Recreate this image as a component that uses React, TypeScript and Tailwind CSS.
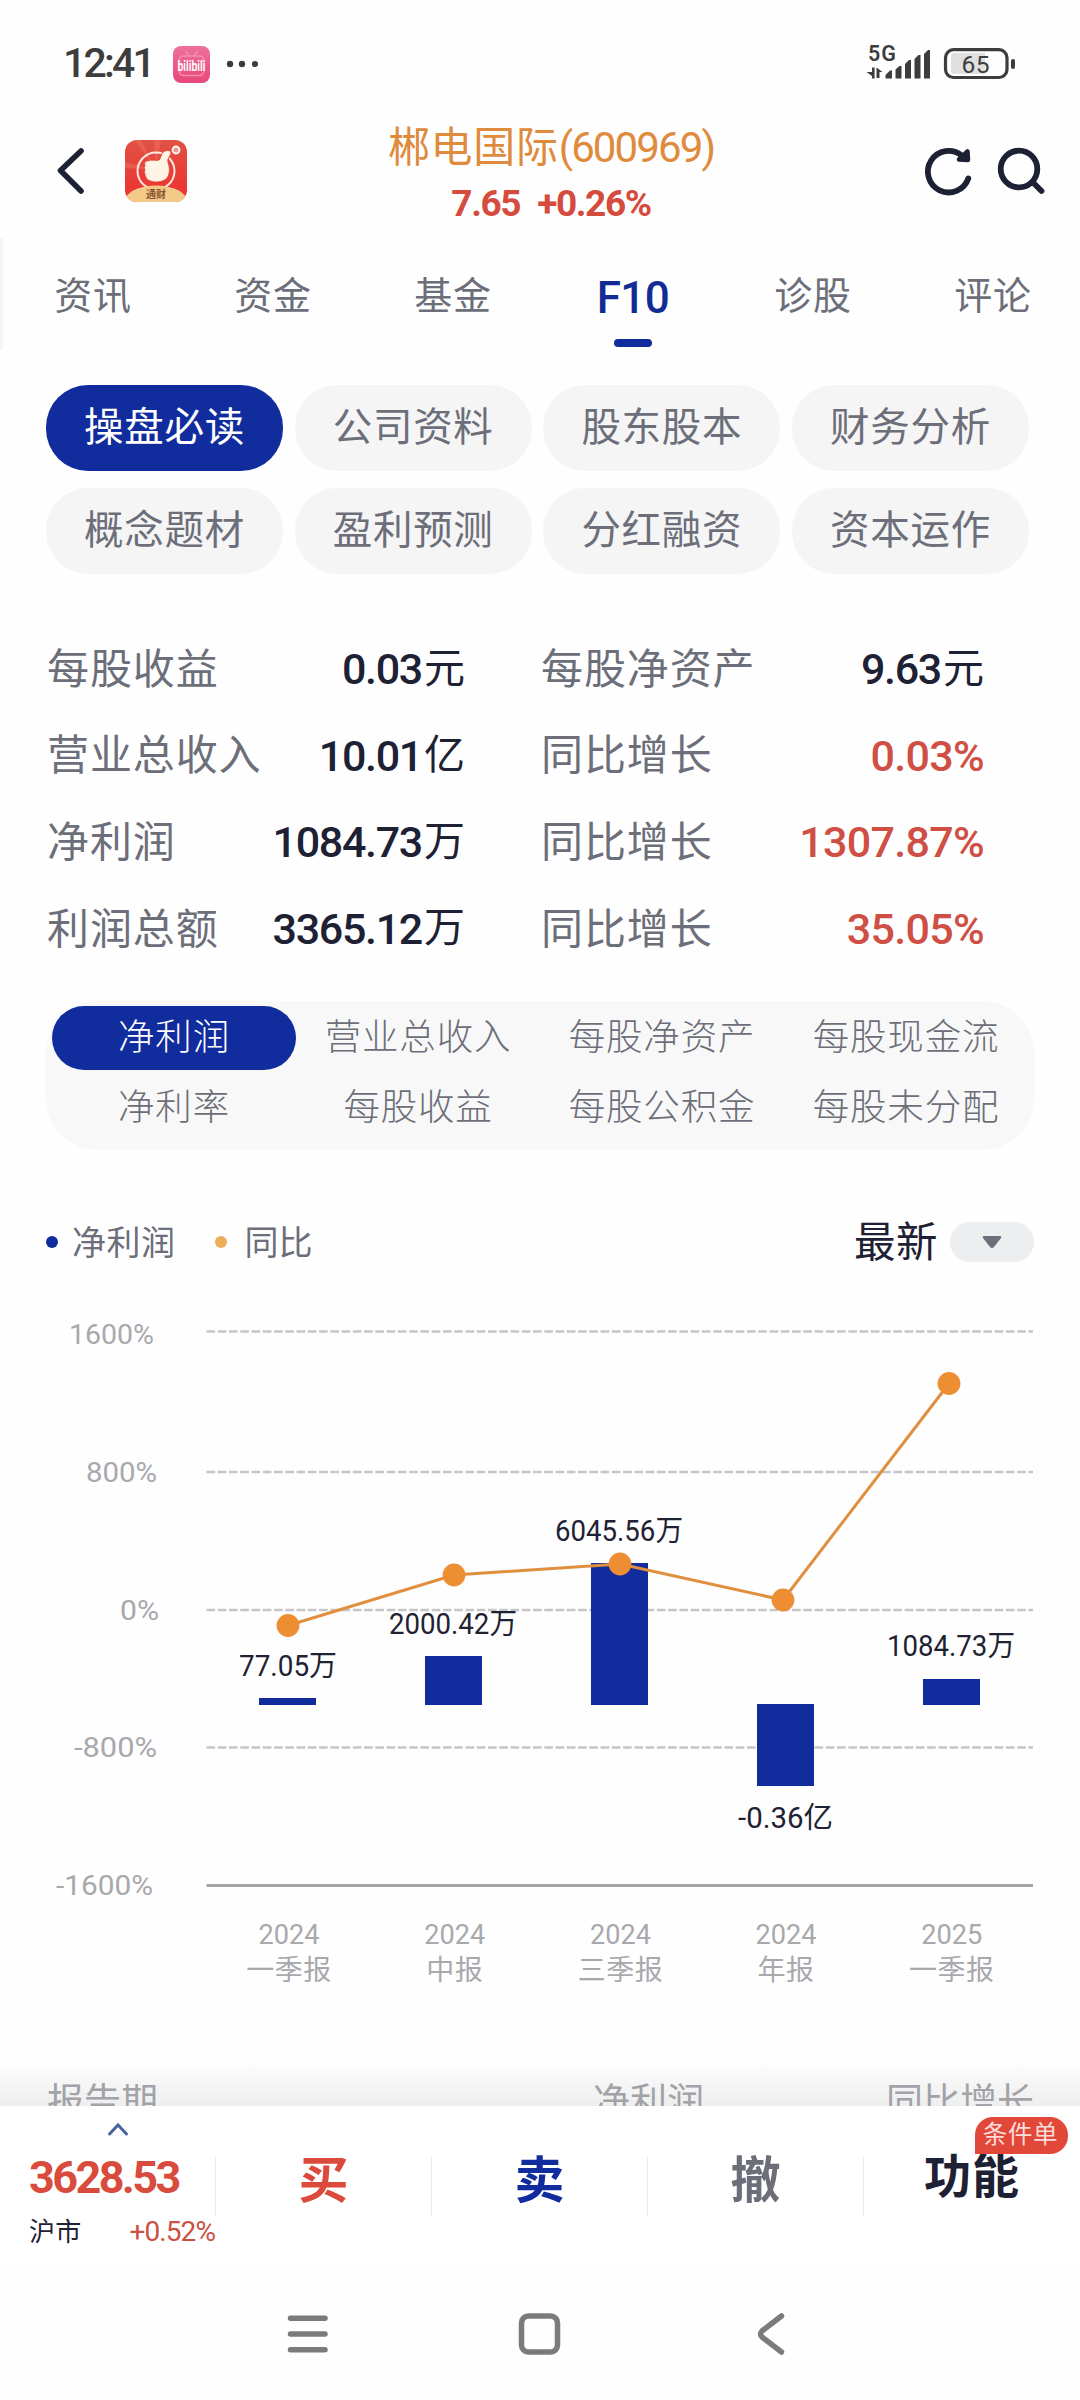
// App.tsx — F10 fundamentals page of a stock detail screen
import { useState } from "react";
import clsx from "clsx";

const TABS = ["资讯", "资金", "基金", "F10", "诊股", "评论"];
const SECTIONS = ["操盘必读", "公司资料", "股东股本", "财务分析", "概念题材", "盈利预测", "分红融资", "资本运作"];
const METRICS = ["净利润", "营业总收入", "每股净资产", "每股现金流", "净利率", "每股收益", "每股公积金", "每股未分配"];

const STATS = [
  { label: "每股收益", value: "0.03", unit: "元", label2: "每股净资产", value2: "9.63", unit2: "元", up: false },
  { label: "营业总收入", value: "10.01", unit: "亿", label2: "同比增长", value2: "0.03%", unit2: "", up: true },
  { label: "净利润", value: "1084.73", unit: "万", label2: "同比增长", value2: "1307.87%", unit2: "", up: true },
  { label: "利润总额", value: "3365.12", unit: "万", label2: "同比增长", value2: "35.05%", unit2: "", up: true },
];

// ── Chart data, in the chart's own 1080×760 space ─────────────────────────────
const AXIS = [
  { text: "1600%", x: 69, w: 85, y: 43.6, line: 31.5 },
  { text: "800%", x: 86, w: 71, y: 181.6, line: 172 },
  { text: "0%", x: 120, w: 39, y: 320, line: 310 },
  { text: "-800%", x: 74, w: 83, y: 457, line: 447.5 },
  { text: "-1600%", x: 56, w: 97, y: 595, line: 585.5 },
];

const PERIODS = [
  { year: "2024", name: "一季报", value: "77.05万", x: 239, w: 98, y: 375.6, top: 398, h: 7, px: 288, py: 325.5 },
  { year: "2024", name: "中报", value: "2000.42万", x: 389, w: 128, y: 333.6, top: 356, h: 49, px: 454, py: 275 },
  { year: "2024", name: "三季报", value: "6045.56万", x: 555, w: 128, y: 241, top: 263, h: 142, px: 620, py: 264 },
  { year: "2024", name: "年报", value: "-0.36亿", x: 738, w: 95, y: 527.6, top: 404, h: 82, px: 783, py: 300 },
  { year: "2025", name: "一季报", value: "1084.73万", x: 887, w: 128, y: 356.4, top: 379, h: 26, px: 949, py: 83.5 },
];

function StatusBar() {
  return (
    <div className="flex h-[110px] items-start justify-between pt-[40px] pr-[64px] pl-[63px] text-[#3d3d3d]">
      <div className="flex h-[48px] items-center">
        <span className="w-[110px] text-[41px] font-medium tracking-[-2.8px] whitespace-nowrap">12:41</span>
        <svg width="37" height="37" viewBox="0 0 37 37">
          <defs>
            <linearGradient id="pink" x1="0" y1="0" x2="0" y2="1">
              <stop offset="0" stopColor="#ee709c" />
              <stop offset="1" stopColor="#e8487a" />
            </linearGradient>
          </defs>
          <rect width="37" height="37" rx="8" fill="url(#pink)" />
          <g fill="none" stroke="#f38db0" strokeWidth="1.6" strokeLinecap="round">
            <rect x="6.5" y="10" width="24" height="19.500" rx="4" />
            <path d="M13 6l3 4M24 6l-3 4" />
          </g>
          <text x="4.500" y="25" textLength="28" lengthAdjust="spacingAndGlyphs" fontSize="14.500" fontWeight="600" fill="#fff">bilibili</text>
        </svg>
        <svg className="ml-[16px]" width="32" height="8" viewBox="0 0 32 8" fill="#3d3d3d">
          <circle cx="4" cy="4" r="3.2" />
          <circle cx="16" cy="4" r="3.2" />
          <circle cx="29" cy="4" r="3.1" />
        </svg>
      </div>
      <svg width="150" height="48" viewBox="866 40 150 48" fill="#3d3d3d">
        <text x="868" y="61" fontSize="21.500" fontWeight="600" textLength="28">5G</text>
        <path d="M872 67.500h2.600v11h-2.600v-2.500l-5.500-4h5.500zM876.500 67.500l6 4.500h-3v6h-3z" />
        <path d="M885.500 75l4.500-4.500h2v8h-6.500zM895.500 69.500l4-3.500h2v12.500h-6zM905 64l4-4h2v18.500h-6zM914.500 59l4-4h2v23.500h-6zM924 54l4-4h2v28.500h-6z" />
        <path d="M954 53h31v21h-31q-3 0-3-3v-15q0-3 3-3z" fill="#e0e0e0" />
        <rect x="945.500" y="49.700" width="61.500" height="27.800" rx="8" fill="none" stroke="#3d3d3d" strokeWidth="3.200" />
        <rect x="1011" y="59" width="4" height="10" rx="2" />
        <text x="961.500" y="72.500" fontSize="24.500" textLength="28">65</text>
      </svg>
    </div>
  );
}

function Header() {
  return (
    <header className="flex h-[128px] items-start pr-[34px] pl-[56px] text-[#1d2133]">
      <div className="flex w-[332px] items-center pt-[30px]">
        <svg width="32" height="62" viewBox="0 0 32 62" fill="none" stroke="currentColor" strokeWidth="5.600" strokeLinecap="round" strokeLinejoin="round">
          <path d="M25 11L4.500 30.500l20.500 20.500" />
        </svg>
        <svg className="ml-[37px]" width="62" height="62" viewBox="0 0 62 62">
          <defs>
            <clipPath id="tile"><rect width="62" height="62" rx="12" /></clipPath>
            <linearGradient id="red" x1="0" y1="0" x2="0" y2="1">
              <stop offset="0" stopColor="#e05245" />
              <stop offset="1" stopColor="#ef2f2d" />
            </linearGradient>
          </defs>
          <g clipPath="url(#tile)">
            <rect width="62" height="62" fill="url(#red)" />
            <path d="M31 30L10 0h6zM31 30L0 22v6zM31 30L29 0h7z" fill="#f0705f" opacity=".5" />
            <circle cx="31" cy="31" r="18.500" fill="none" stroke="#fde9e0" strokeWidth="2" />
            {/* thumbs-up fist */}
            <path d="M34 20c2-2 2-6 4-8 3-2 7-2 8 0 0 4-4 6-3 10 2 6 2 12-1 16-4 5-14 5-19 2-2-2-3-4-3-6-1-1-1-3 0-4-1-2-1-3 0-4-1-3 0-5 2-5 4-2 9 0 12-1z" fill="#fff3e6" stroke="#e8453a" strokeWidth="1" />
            <circle cx="51" cy="10" r="3.500" fill="#f3968b" stroke="#fff" strokeWidth="1.800" />
            <ellipse cx="31" cy="61" rx="31" ry="15.500" fill="#f3c987" />
            <text x="21" y="58" fontSize="10" fontWeight="700" fill="#8a5330" textLength="20">通财</text>
          </g>
        </svg>
      </div>
      <div className="flex w-[326px] flex-col items-center">
        <h1 className="flex h-[75px] items-center whitespace-nowrap text-[#df8b3d]">
          <span className="text-[42px] tracking-[0.700px]">郴电国际</span>
          <span className="text-[42px] tracking-[-1.900px]">(600969)</span>
        </h1>
        <p className="flex h-[38px] gap-[17px] text-[37px] leading-[38px] font-bold tracking-[-1.400px] whitespace-nowrap text-[#d54b3d]">
          <span>7.65</span>
          <span>+0.26%</span>
        </p>
      </div>
      <svg className="mt-[30px] ml-auto" width="124" height="62" viewBox="922 140 124 62" fill="none" stroke="currentColor" strokeWidth="5.800" strokeLinecap="round">
        <path d="M968.300 178.500a20.800 20.800 0 1 1-6.500-23" />
        <path d="M967.500 151.500l0.500 8.500-9-.5z" fill="currentColor" strokeWidth="4.500" strokeLinejoin="round" />
        <circle cx="1019" cy="169" r="18.300" />
        <path d="M1033 182.500l8.500 8.500" />
      </svg>
    </header>
  );
}

function ProfitChart() {
  return (
    <svg className="block" width="1080" height="760" viewBox="0 0 1080 760">
      {AXIS.map((a, i) => (
        <g key={a.text}>
          <text x={a.x} y={a.y} fontSize="28.500" fill="#a8a8ad" textLength={a.w} lengthAdjust="spacingAndGlyphs">{a.text}</text>
          {i < 4 ? (
            <path d={`M206.500 ${a.line}H1033`} stroke="#c6c6c8" strokeWidth="2.600" strokeDasharray="8.600 2.660" />
          ) : (
            <path d={`M206.500 ${a.line}H1033`} stroke="#a6a6aa" strokeWidth="3" />
          )}
        </g>
      ))}
      {PERIODS.map((p, i) => (
        <g key={i}>
          <rect x={259 + i * 166} y={p.top} width="57" height={p.h} fill="#112c9d" />
          <text x={p.x} y={p.y} fontSize="29" fill="#1f2233" textLength={p.w} lengthAdjust="spacingAndGlyphs">{p.value}</text>
          <text x={258.500 + i * 165.7} y="643.600" fontSize="28.500" fill="#a8a8ad" textLength="61" lengthAdjust="spacingAndGlyphs">{p.year}</text>
          <text x={289 + i * 165.7} y="680" fontSize="28" letterSpacing="0.500" fill="#a8a8ad" textAnchor="middle">{p.name}</text>
        </g>
      ))}
      <polyline points={PERIODS.map((p) => `${p.px},${p.py}`).join(" ")} fill="none" stroke="#e08f3e" strokeWidth="3" />
      {PERIODS.map((p) => (
        <circle key={p.px} cx={p.px} cy={p.py} r="11.400" fill="#ee8e33" />
      ))}
    </svg>
  );
}

function TradeBar() {
  return (
    <div className="flex h-[162px] shrink-0 bg-white font-bold">
      <div className="flex w-[215px] flex-col pl-[29px]">
        <svg className="mt-[15px] ml-[78px]" width="22" height="16" viewBox="0 0 22 16" fill="none" stroke="#46659a" strokeWidth="3" strokeLinecap="round">
          <path d="M2.500 13L11 4l8.500 9" />
        </svg>
        <span className="mt-[14px] text-[45px] leading-[53px] tracking-[-2.600px] text-[#d94b3d]">3628.53</span>
        <div className="mt-[10px] flex h-[37px] items-center justify-between font-normal whitespace-nowrap">
          <span className="text-[26px] tracking-[0.300px] text-[#1f2233]">沪市</span>
          <span className="text-[28px] tracking-[-0.900px] text-[#cc5144]">+0.52%</span>
        </div>
      </div>
      <button className="mt-[51px] h-[59px] w-[216px] border-l border-[#e9e9eb] pb-[10px] text-[50px] leading-[48px] text-[#dc4a3c]">买</button>
      <button className="mt-[51px] h-[59px] w-[216px] border-l border-[#e9e9eb] pb-[10px] text-[50px] leading-[48px] text-[#112c9d]">卖</button>
      <button className="mt-[51px] h-[59px] w-[216px] border-l border-[#e9e9eb] pb-[10px] text-[50px] leading-[48px] text-[#6c6e7a]">撤</button>
      <button className="relative mt-[51px] h-[59px] w-[217px] border-l border-[#e9e9eb] pb-[18px] text-[47px] leading-[38px] tracking-[1px] text-[#1d2133]">
        功能
        <span className="absolute top-[-40px] right-[12px] flex h-[37px] w-[93px] items-center justify-center rounded-[18px] rounded-bl-none bg-[#e1483a] pr-[2px] text-[24.500px] font-normal tracking-[0.700px] text-[#fbdcd8]">
          条件单
        </span>
      </button>
    </div>
  );
}

export default function App() {
  const [tab, setTab] = useState("F10");
  const [section, setSection] = useState("操盘必读");
  const [metric, setMetric] = useState("净利润");

  return (
    <div className="flex h-[2400px] w-[1080px] flex-col overflow-hidden bg-[#fefefe] font-['Roboto','Noto_Sans_CJK_SC',sans-serif]">
      <StatusBar />
      <Header />

      {/* ── Top tabs ────────────────────────────────────────────────── */}
      <nav className="flex h-[112px] w-[1100px] shrink-0 border-l-[3px] border-[#f5f5fb]">
        {TABS.map((t) => (
          <button
            key={t}
            onClick={() => setTab(t)}
            className={clsx(
              "relative h-[112px] w-[180px]",
              t === tab ? "pt-[8px] text-[44px] font-medium tracking-[-0.500px] text-[#112c94]" : "pt-[5px] text-[38px] tracking-[0.800px] text-[#6c6e79]"
            )}
          >
            {t}
            {t === tab && <span className="absolute bottom-[3px] left-[71px] h-[8px] w-[38px] rounded-full bg-[#112c9d]" />}
          </button>
        ))}
      </nav>

      {/* ── Section pills ───────────────────────────────────────────── */}
      <div className="mt-[35px] grid shrink-0 grid-cols-4 gap-x-[11.700px] gap-y-[17px] pr-[51px] pl-[46px]">
        {SECTIONS.map((s) => (
          <button
            key={s}
            onClick={() => setSection(s)}
            className={clsx(
              "h-[86px] rounded-[42px] text-[39.500px] tracking-[0.700px]",
              s === section ? "bg-[#112c9d] text-white" : "bg-[#f5f5f5] text-[#6c6e79]"
            )}
          >
            {s}
          </button>
        ))}
      </div>

      {/* ── Key figures ─────────────────────────────────────────────── */}
      <div className="mt-[52px] shrink-0 pl-[47px] text-[42px]">
        {STATS.map((r) => (
          <div key={r.label} className="flex h-[86.600px] items-center whitespace-nowrap">
            <span className="tracking-[0.900px] text-[#6c6e79]">{r.label}</span>
            <span className="ml-auto flex items-center text-[#1d2133]">
              <span className="text-[43px] font-medium tracking-[-1.300px]">{r.value}</span>
              <span className="ml-[2px] text-[41px]">{r.unit}</span>
            </span>
            <div className="ml-[76px] flex w-[539px] items-center">
              <span className="tracking-[0.900px] text-[#6c6e79]">{r.label2}</span>
              <span className={clsx("mr-[96px] ml-auto flex items-center", r.up ? "text-[#cf4f44]" : "text-[#1d2133]")}>
                <span className={clsx("text-[43px] font-medium", r.up ? "tracking-[-0.700px]" : "tracking-[-1.300px]")}>{r.value2}</span>
                {r.unit2 && <span className="ml-[2px] text-[41px]">{r.unit2}</span>}
              </span>
            </div>
          </div>
        ))}
      </div>

      {/* ── Metric switch ───────────────────────────────────────────── */}
      <div className="mt-[29px] ml-[46px] grid h-[149px] w-[988px] shrink-0 grid-cols-4 content-start gap-y-[6px] rounded-[52px] bg-[#f8f8f8] p-[6px] pt-[5px]">
        {METRICS.map((m) => (
          <button
            key={m}
            onClick={() => setMetric(m)}
            className={clsx(
              "h-[64px] rounded-full pb-[1px] text-[36.500px] font-light tracking-[0.800px]",
              m === metric ? "bg-[#112c9d] text-white" : "text-[#6c6e79]"
            )}
          >
            {m}
          </button>
        ))}
      </div>

      {/* ── Legend ──────────────────────────────────────────────────── */}
      <div className="mt-[67px] flex h-[50px] shrink-0 items-center pr-[46px] pl-[46px] text-[34px] text-[#6c6e79]">
        <i className="h-[12px] w-[12px] rounded-full bg-[#112c9d]" />
        <span className="ml-[14px] pt-[3px] tracking-[0.500px]">净利润</span>
        <i className="ml-[39px] h-[12px] w-[12px] rounded-full bg-[#efac5a]" />
        <span className="ml-[18px] pt-[3px]">同比</span>
        <span className="ml-auto pt-[2px] text-[41.500px] tracking-[0.500px] text-[#1d2133]">最新</span>
        <span className="ml-[12px] flex h-[40px] w-[84px] items-center justify-center rounded-full bg-[#edeef0]">
          <svg width="20" height="12" viewBox="0 0 20 12"><path d="M2 0h16q2 0 1 2l-7 9q-2 2-4 0L1 2Q0 0 2 0z" fill="#6c6e7a" /></svg>
        </span>
      </div>

      <div className="mt-[32.600px] h-[760px] shrink-0">
        <ProfitChart />
      </div>

      {/* ── Report table header, cut off by the trade bar ───────────── */}
      <div className="flex h-[46px] shrink-0 items-start overflow-hidden bg-gradient-to-b from-[#fefefe] to-[#eeeeee] pt-[21px] pl-[47px] text-[37px] leading-[44px] text-[#a2a2a8]">
        <span className="w-[546px]">报告期</span>
        <span className="w-[293px]">净利润</span>
        <span className="whitespace-nowrap">同比增长</span>
      </div>

      <TradeBar />

      {/* ── System navigation ───────────────────────────────────────── */}
      <div className="flex h-[132px] shrink-0 items-center pl-[284px]">
        <svg width="504" height="50" viewBox="284 2308.500 504 50" fill="none" stroke="#7b7b7b" strokeWidth="5.500" strokeLinecap="round" strokeLinejoin="round">
          <path d="M290.500 2317.700h34.500M290.500 2333.500h34.500M290.500 2349.200h34.500" />
          <rect x="521.500" y="2315.500" width="36" height="36" rx="7" />
          <path d="M781.500 2315.500l-19 14.500q-4 3.500 0 7l19 14.500" />
        </svg>
      </div>
    </div>
  );
}
